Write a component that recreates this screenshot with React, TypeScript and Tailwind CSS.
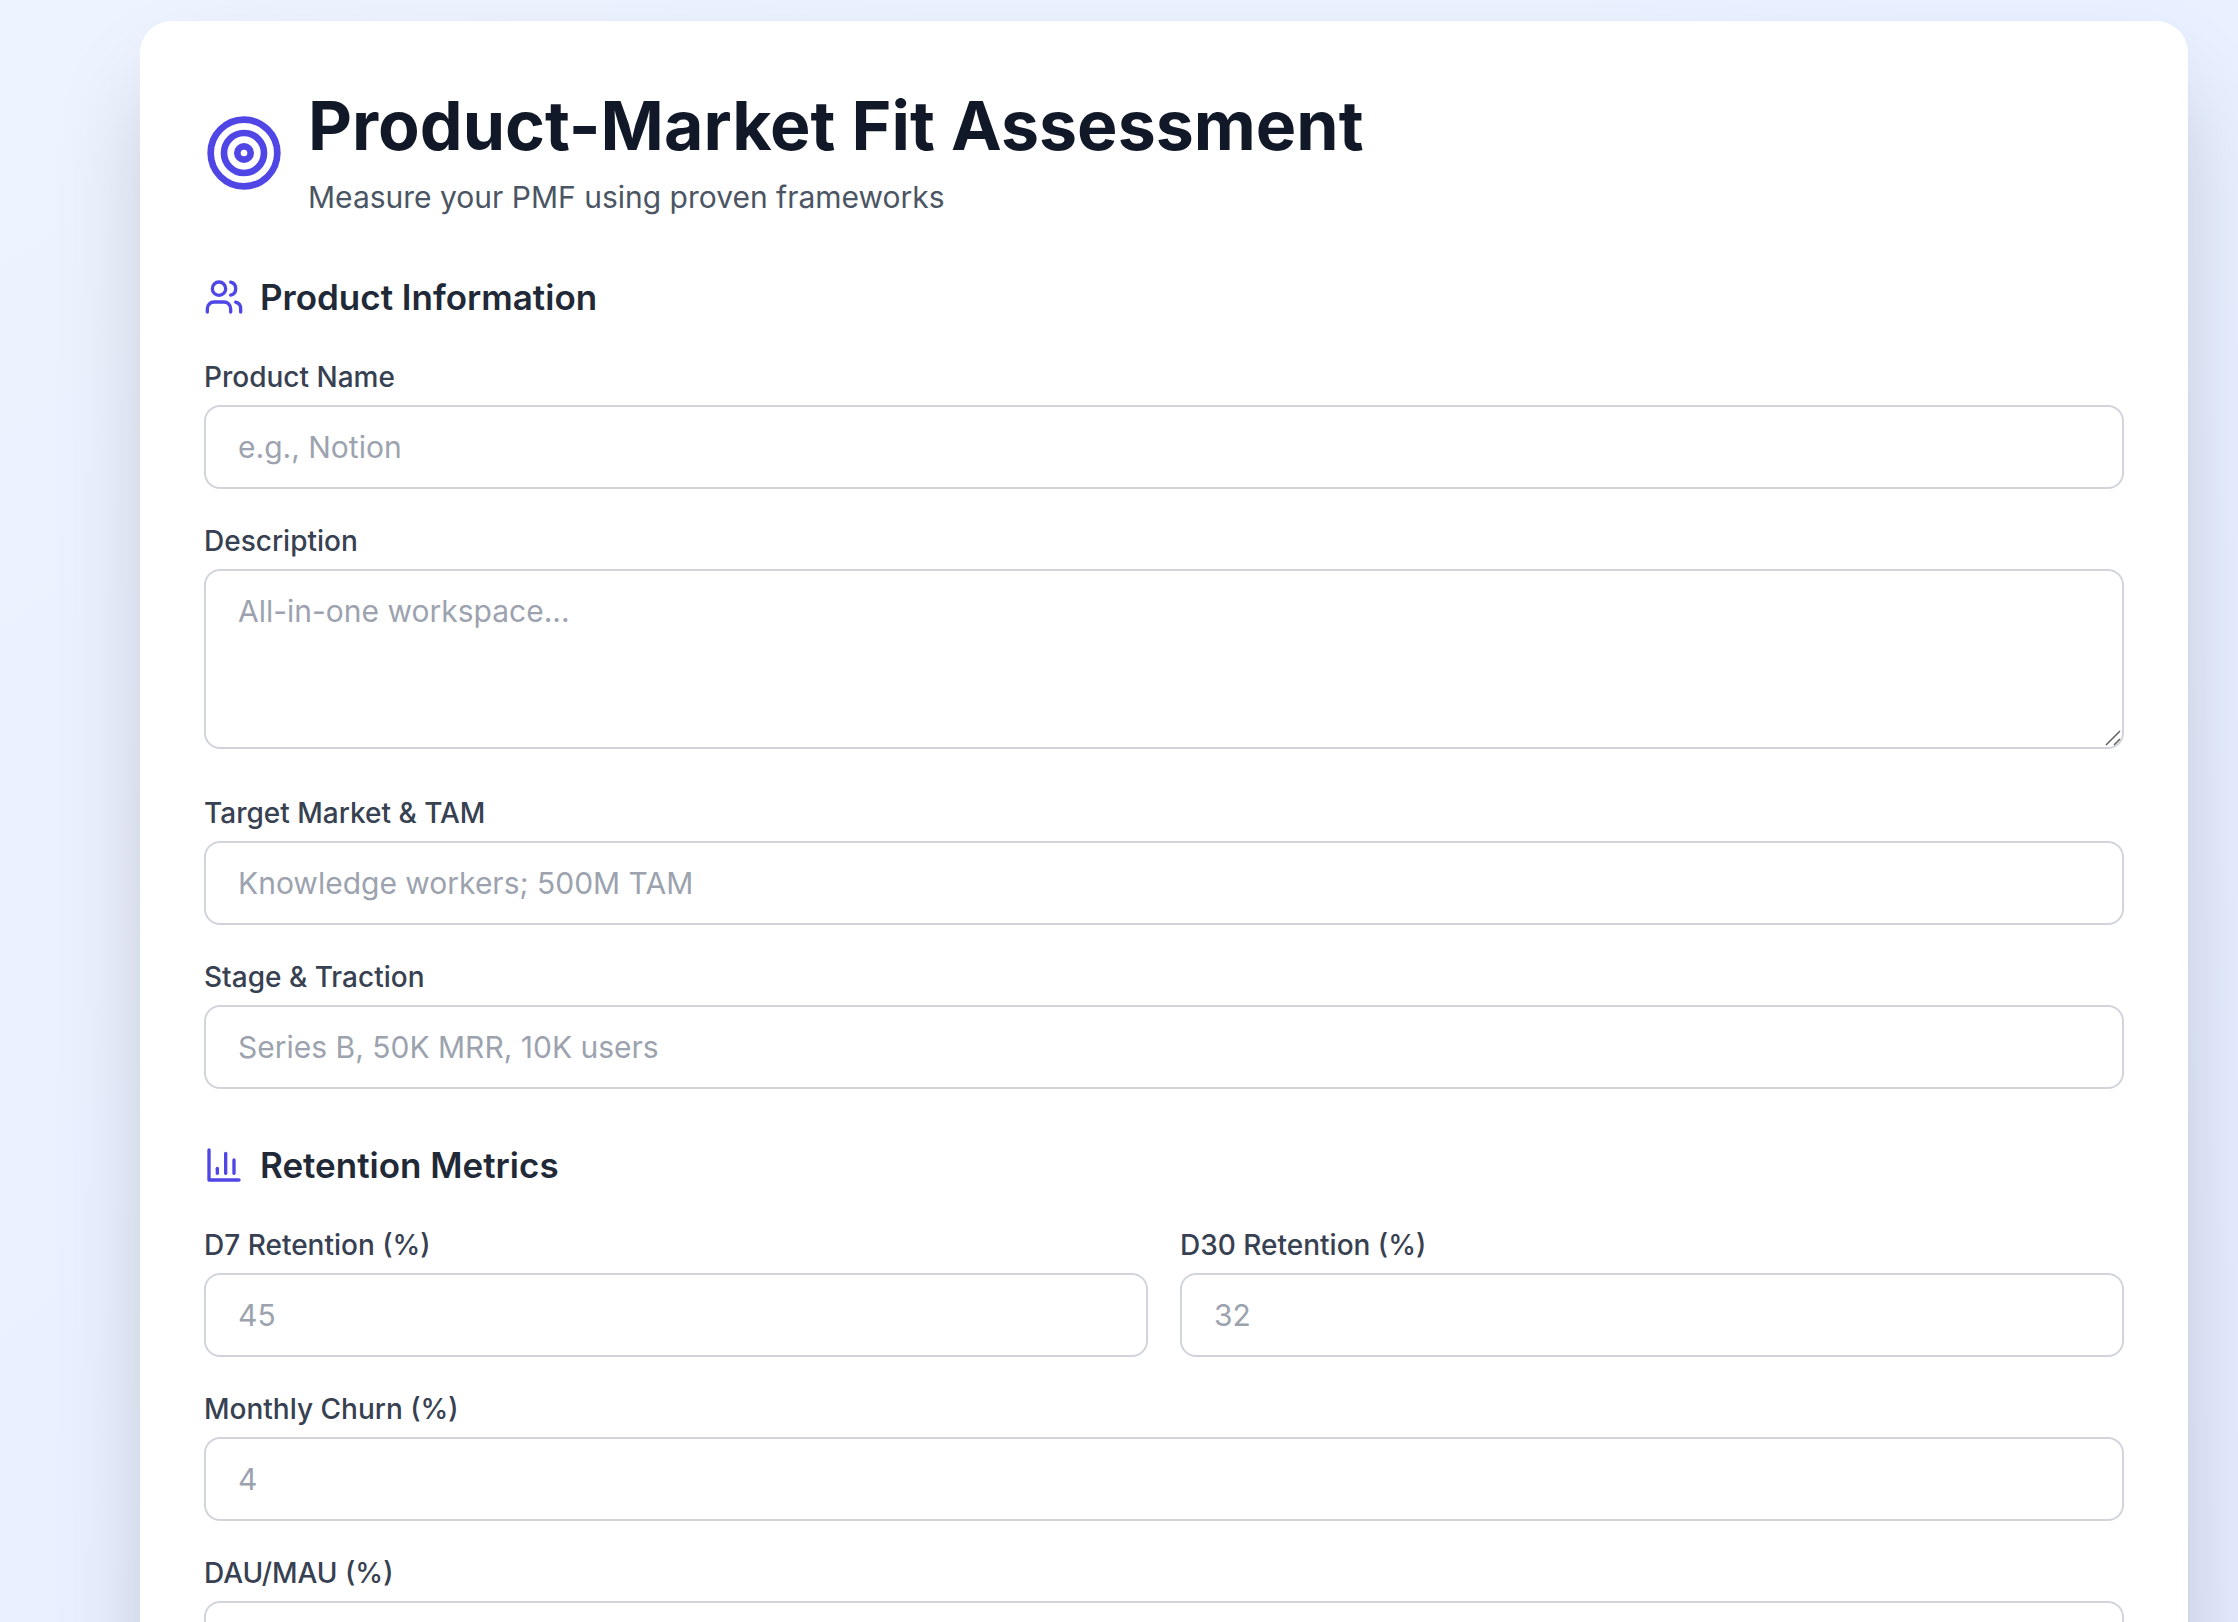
import type { ReactNode } from "react";

const controlClass =
  "block w-full rounded-2xl border-2 border-[#d1d5db] bg-white px-8 py-4 text-[30px] leading-[48px] text-[#111827] placeholder:text-[#9ca3af] focus:border-[#4f46e5] focus:outline-none";

function Icon({ className, children }: { className: string; children: ReactNode }) {
  return (
    <svg
      viewBox="0 0 24 24"
      fill="none"
      stroke="currentColor"
      strokeWidth="2"
      strokeLinecap="round"
      strokeLinejoin="round"
      aria-hidden="true"
      className={`shrink-0 text-[#4f46e5] ${className}`}
    >
      {children}
    </svg>
  );
}

function Label({ id, children }: { id: string; children: ReactNode }) {
  return (
    <label htmlFor={id} className="mb-2 block text-[28px] leading-10 font-medium text-[#374151]">
      {children}
    </label>
  );
}

function Field({ id, label, placeholder }: { id: string; label: string; placeholder?: string }) {
  return (
    <div>
      <Label id={id}>{label}</Label>
      <input id={id} type="text" placeholder={placeholder} className={controlClass} />
    </div>
  );
}

function Section({ icon, title, children }: { icon: ReactNode; title: string; children: ReactNode }) {
  return (
    <section className="mt-12">
      <h2 className="mb-8 flex items-center gap-4 text-[35px] leading-[56px] font-semibold text-[#1f2937]">
        {icon}
        {title}
      </h2>
      <div className="flex flex-col gap-8">{children}</div>
    </section>
  );
}

export default function App() {
  return (
    <div className="h-screen overflow-hidden bg-linear-to-br from-[#edf4ff] to-[#e4ebff] pt-[21px] pr-[50px] pl-[140px] font-['Inter',sans-serif]">
      <main className="rounded-[32px] bg-white p-16 shadow-[0_50px_100px_-24px_rgba(0,0,0,0.25)]">
        <header className="flex items-center gap-6">
          <Icon className="size-20">
            <circle cx="12" cy="12" r="10" />
            <circle cx="12" cy="12" r="6" />
            <circle cx="12" cy="12" r="2" />
          </Icon>
          <div>
            <h1 className="text-[68px] leading-[80px] font-bold text-[#111827]">Product-Market Fit Assessment</h1>
            <p className="mt-2 text-[30px] leading-[48px] text-[#4b5563]">Measure your PMF using proven frameworks</p>
          </div>
        </header>

        <Section
          title="Product Information"
          icon={
            <Icon className="size-10">
              <path d="M16 21v-2a4 4 0 0 0-4-4H6a4 4 0 0 0-4 4v2" />
              <circle cx="9" cy="7" r="4" />
              <path d="M22 21v-2a4 4 0 0 0-3-3.87" />
              <path d="M16 3.13a4 4 0 0 1 0 7.75" />
            </Icon>
          }
        >
          <Field id="product-name" label="Product Name" placeholder="e.g., Notion" />
          <div className="mb-3">
            <Label id="description">Description</Label>
            <div className="relative">
              <textarea
                id="description"
                rows={3}
                placeholder="All-in-one workspace..."
                className={`resize-y [&::-webkit-resizer]:bg-transparent ${controlClass}`}
              />
              <svg
                viewBox="0 0 16 16"
                stroke="#5f5f5f"
                strokeWidth="1.5"
                aria-hidden="true"
                className="pointer-events-none absolute right-[3px] bottom-[3px] size-4"
              >
                <path d="M1 15 15 1M9 15l6-6" />
              </svg>
            </div>
          </div>
          <Field id="target-market" label="Target Market & TAM" placeholder="Knowledge workers; 500M TAM" />
          <Field id="stage" label="Stage & Traction" placeholder="Series B, 50K MRR, 10K users" />
        </Section>

        <Section
          title="Retention Metrics"
          icon={
            <Icon className="size-10">
              <path d="M3 3v18h18" />
              <path d="M18 17V9" />
              <path d="M13 17V5" />
              <path d="M8 17v-3" />
            </Icon>
          }
        >
          <div className="grid grid-cols-2 gap-8">
            <Field id="d7" label="D7 Retention (%)" placeholder="45" />
            <Field id="d30" label="D30 Retention (%)" placeholder="32" />
          </div>
          <Field id="churn" label="Monthly Churn (%)" placeholder="4" />
          <Field id="dau-mau" label="DAU/MAU (%)" />
        </Section>
      </main>
    </div>
  );
}
